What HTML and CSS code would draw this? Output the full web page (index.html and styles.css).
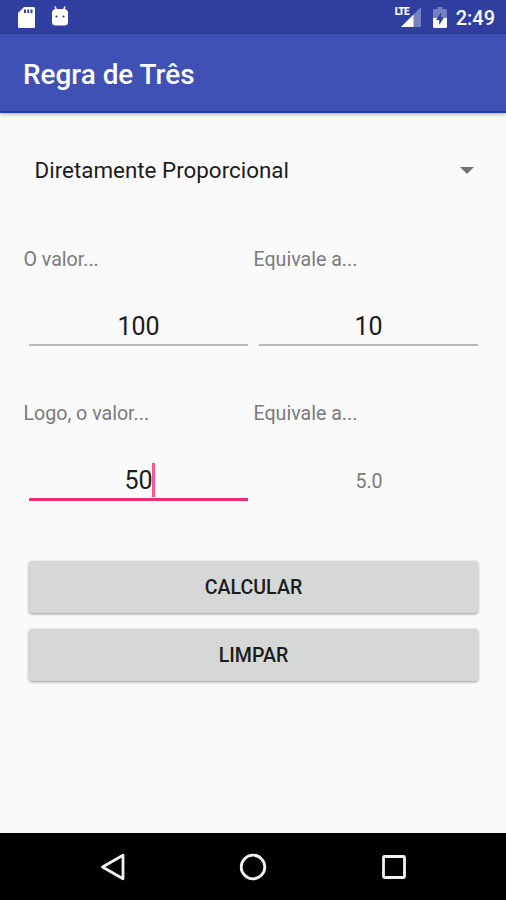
FILE: index.html
```html
<!DOCTYPE html>
<html lang="pt-BR">
<head>
<meta charset="UTF-8">
<meta name="viewport" content="width=device-width, initial-scale=1.0">
<title>Regra de Três</title>
<link rel="stylesheet" href="styles.css">
</head>
<body>

<!-- Barra de status -->
<div class="status-bar">
    <div class="status-left">
        <svg width="17" height="21" viewBox="0 0 17 21">
            <path fill="#fff" fill-rule="evenodd" d="M6 0H15.500Q17 0 17 1.500V19.500Q17 21 15.500 21H1.500Q0 21 0 19.500V6ZM6 2.500V6H8V2.500ZM9.300 2.500V6H11.200V2.500ZM12.500 2.500V6H14.500V2.500Z"/>
        </svg>
        <svg class="robot" width="18" height="20" viewBox="0 0 18 20">
            <path stroke="#fff" stroke-width="1.500" d="M4 0.500L5.500 4M14 0.500L12.500 4"/>
            <path fill="#fff" d="M1 6Q2 3 5 3H13Q16 3 17 6V16Q17 19.500 13.500 19.500H4.500Q1 19.500 1 16Z"/>
            <circle cx="5.500" cy="10.500" r="1.100" fill="#303f9f"/>
            <circle cx="12.500" cy="10.500" r="1.100" fill="#303f9f"/>
        </svg>
    </div>
    <div class="status-right">
        <div class="signal">
            <svg width="21" height="20" viewBox="0 0 21 20">
                <path fill="#7781c0" d="M21 0V20H1Z"/>
                <path fill="#303f9f" d="M0 0H12V10H0Z"/>
                <path fill="#fff" d="M13.500 7.500V20H1Z"/>
            </svg>
            <span class="lte">LTE</span>
        </div>
        <svg class="battery" width="14" height="21" viewBox="0 0 14 21">
            <path fill="#7781c0" d="M4.500 0H9.500V2H12.500Q14 2 14 3.500V11H0V3.500Q0 2 1.500 2H4.500Z"/>
            <path fill="#fff" d="M0 11H14V19.500Q14 21 12.500 21H1.500Q0 21 0 19.500Z"/>
            <path fill="#303f9f" d="M8 5.500L3 13H6.200V18L11 10.500H8Z"/>
        </svg>
        <span class="clock">2:49</span>
    </div>
</div>

<!-- Cabeçalho -->
<header class="toolbar">
    <h1>Regra de Três</h1>
</header>

<!-- Formulário -->
<main class="container">
    <div class="spinner">
        <span>Diretamente Proporcional</span>
        <svg width="14" height="7" viewBox="0 0 14 7"><path fill="#727272" d="M0 0H14L7 7Z"/></svg>
    </div>

    <div class="row">
        <div class="field">
            <div class="label">O valor...</div>
            <div class="input"><span>100</span></div>
        </div>
        <div class="field">
            <div class="label">Equivale a...</div>
            <div class="input"><span>10</span></div>
        </div>
    </div>

    <div class="row">
        <div class="field">
            <div class="label">Logo, o valor...</div>
            <div class="input focused"><span>50<i class="cursor"></i></span></div>
        </div>
        <div class="field">
            <div class="label">Equivale a...</div>
            <div class="result">5.0</div>
        </div>
    </div>

    <div class="buttons">
        <button type="button">CALCULAR</button>
        <button type="button">LIMPAR</button>
    </div>
</main>

<!-- Barra de navegação -->
<nav class="nav-bar">
    <svg width="28" height="28" viewBox="0 0 28 28"><path d="M24 2.200V25.800L3.500 14Z"/></svg>
    <svg width="28" height="28" viewBox="0 0 28 28"><circle cx="14" cy="14" r="11.800"/></svg>
    <svg width="28" height="28" viewBox="0 0 28 28"><rect x="3.500" y="3.500" width="21" height="21" rx="1"/></svg>
</nav>

</body>
</html>
```

FILE: styles.css
```css
* {
    box-sizing: border-box;
}
body {
    margin: 0;
    height: 900px;
    display: flex;
    flex-direction: column;
    font-family: Roboto, "Liberation Sans", sans-serif;
    background-color: #fafafa;
    color: #1c1c1c;
    overflow: hidden;
}
svg {
    display: block;
}
/* Barra de status */
.status-bar {
    height: 34px;
    display: flex;
    justify-content: space-between;
    padding: 0 11px 0 18px;
    background-color: #303f9f;
}
.status-left,
.status-right {
    display: flex;
    align-items: center;
}
.status-left {
    gap: 16px;
}
.robot {
    margin-bottom: 2px;
}
.signal {
    position: relative;
    margin-right: 12px;
}
.lte {
    position: absolute;
    top: 0;
    left: -5px;
    font-size: 10px;
    line-height: 10px;
    font-weight: 900;
    letter-spacing: -0.7px;
    color: #fff;
}
.battery {
    margin-right: 9px;
}
.clock {
    padding-top: 1px;
    font-size: 20px;
    font-weight: 500;
    color: #fff;
}
/* Cabeçalho */
.toolbar {
    height: 79px;
    display: flex;
    align-items: center;
    padding: 0 23px;
    background-color: #3f51b5;
    border-bottom: 2px solid #2440a6;
    box-shadow: 0 1px 4px rgba(0, 0, 0, 0.35);
}
.toolbar h1 {
    margin: 4px 0 0;
    font-size: 27.9px;
    font-weight: 500;
    color: #fff;
}
/* Formulário */
.container {
    flex: 1;
    padding: 23px 23px 0;
}
.spinner {
    height: 68px;
    display: flex;
    align-items: center;
    justify-content: space-between;
    padding: 0 9px 0 11.5px;
    margin-bottom: 43px;
    font-size: 22.4px;
}
.row {
    display: grid;
    grid-template-columns: 1fr 1fr;
    height: 154px;
}
.label {
    height: 26px;
    padding-left: 0.5px;
    line-height: 26px;
    font-size: 19.6px;
    color: #7b7b7b;
}
.input,
.result {
    margin: 35px 5.5px 0;
    text-align: center;
}
.input {
    height: 38px;
    padding-left: 1px;
    line-height: 38px;
    font-size: 25px;
    border-bottom: 2px solid #b9bbba;
}
.input.focused {
    border-bottom: 3px solid #ea2f78;
    height: 39px;
}
.input span {
    position: relative;
}
.cursor {
    position: absolute;
    top: -3px;
    right: -2px;
    width: 3px;
    height: 34px;
    background-color: #f9548c;
}
.result {
    padding-left: 2px;
    line-height: 40px;
    font-size: 19.6px;
    color: #7b7b7b;
}
.buttons {
    display: flex;
    flex-direction: column;
    gap: 16px;
    padding: 6px 5.5px 0;
}
button {
    height: 52px;
    padding: 0 0 0 1px;
    border: none;
    border-radius: 3px;
    background-color: #d6d7d7;
    box-shadow: 0 1px 3px rgba(0, 0, 0, 0.4);
    font-family: inherit;
    font-size: 19.6px;
    font-weight: 500;
    color: #1c1c1c;
}
/* Barra de navegação */
.nav-bar {
    height: 67px;
    display: flex;
    align-items: center;
    justify-content: center;
    gap: 112.5px;
    background-color: #000;
}
.nav-bar svg {
    fill: none;
    stroke: #f2f2f2;
    stroke-width: 2.8;
    stroke-linejoin: round;
}
```
